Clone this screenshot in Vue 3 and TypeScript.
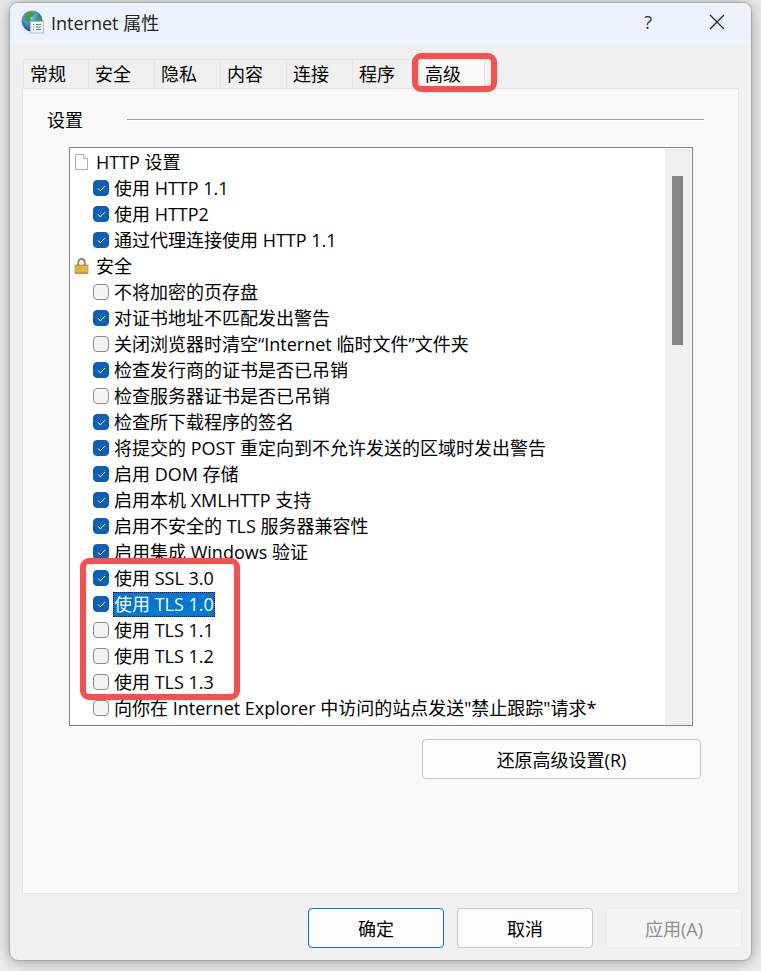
<script setup lang="ts">
interface Row {
  label: string
  kind?: 'page' | 'lock'
  checked?: boolean
  selected?: boolean
}

const tabs = ['常规', '安全', '隐私', '内容', '连接', '程序', '高级']

const rows: Row[] = [
  { label: 'HTTP 设置', kind: 'page' },
  { label: '使用 HTTP 1.1', checked: true },
  { label: '使用 HTTP2', checked: true },
  { label: '通过代理连接使用 HTTP 1.1', checked: true },
  { label: '安全', kind: 'lock' },
  { label: '不将加密的页存盘', checked: false },
  { label: '对证书地址不匹配发出警告', checked: true },
  { label: '关闭浏览器时清空“Internet 临时文件”文件夹', checked: false },
  { label: '检查发行商的证书是否已吊销', checked: true },
  { label: '检查服务器证书是否已吊销', checked: false },
  { label: '检查所下载程序的签名', checked: true },
  { label: '将提交的 POST 重定向到不允许发送的区域时发出警告', checked: true },
  { label: '启用 DOM 存储', checked: true },
  { label: '启用本机 XMLHTTP 支持', checked: true },
  { label: '启用不安全的 TLS 服务器兼容性', checked: true },
  { label: '启用集成 Windows 验证', checked: true },
  { label: '使用 SSL 3.0', checked: true },
  { label: '使用 TLS 1.0', checked: true, selected: true },
  { label: '使用 TLS 1.1', checked: false },
  { label: '使用 TLS 1.2', checked: false },
  { label: '使用 TLS 1.3', checked: false },
  { label: '向你在 Internet Explorer 中访问的站点发送"禁止跟踪"请求*', checked: false },
]
</script>

<template>
  <div class="dialog">
    <header class="titlebar">
      <svg class="app-icon" width="24" height="24" viewBox="0 0 24 24">
        <defs>
          <radialGradient id="globe" cx="0.4" cy="0.3" r="0.8">
            <stop offset="0" stop-color="#8fd0f5" />
            <stop offset="0.55" stop-color="#2f7fc8" />
            <stop offset="1" stop-color="#123f80" />
          </radialGradient>
        </defs>
        <circle cx="11" cy="11" r="10.5" fill="url(#globe)" />
        <path d="M6 2.500l5-1 3 2-2 3-3 1 1 3-3 2-3-3-1-3z" fill="#4e9a3a" />
        <path d="M14 8l5-1 2 3-3 2-3-1z" fill="#4e9a3a" />
        <rect x="9.500" y="11.500" width="13" height="11.500" fill="#eef5fb" stroke="#a9c0d4" />
        <path d="M12 14.500h1M15 14.500h5M12 17h1M15 17h5M12 19.500h1M15 19.500h5" stroke="#5c86a8" />
      </svg>
      <span class="title">Internet 属性</span>
      <span class="help">?</span>
      <svg class="close" width="16" height="16" viewBox="0 0 16 16">
        <path d="M1 1l14 14M15 1L1 15" stroke="#222" stroke-width="1.200" fill="none" />
      </svg>
    </header>

    <div class="content">
      <nav class="tabs">
        <div
          v-for="(tab, i) in tabs"
          :key="tab"
          class="tab"
          :class="{ active: i === tabs.length - 1 }"
        >
          {{ tab }}
        </div>
      </nav>

      <section class="panel">
        <div class="legend">
          <span>设置</span>
          <i class="rule" />
        </div>

        <div class="listbox">
          <ul class="tree">
            <li v-for="row in rows" :key="row.label" class="row" :class="{ head: row.kind }">
              <svg v-if="row.kind === 'page'" class="row-icon" width="16" height="16" viewBox="0 0 16 16">
                <path d="M1.500.500h8l4 4v11h-12z" fill="#fff" stroke="#b0b0b0" />
                <path d="M9.500.500v4h4" fill="#eee" stroke="#b0b0b0" />
              </svg>
              <svg v-else-if="row.kind === 'lock'" class="row-icon" width="16" height="16" viewBox="0 0 16 16">
                <path d="M4.300 8V4.200a3.200 3.200 0 0 1 6.400 0V8" fill="none" stroke="#85857a" stroke-width="1.800" />
                <rect x="1" y="7" width="13" height="8.500" fill="#cf9a28" stroke="#a97c18" stroke-width=".6" />
                <path d="M1 9h13M1 11h13M1 13h13" stroke="#f2d578" stroke-width=".9" />
              </svg>
              <span v-else class="check" :class="{ on: row.checked }">
                <svg v-if="row.checked" width="9" height="7" viewBox="0 0 9 7">
                  <path d="M1 3.500l2.300 2.300L8 1" fill="none" stroke="#fff" stroke-width="1" />
                </svg>
              </span>
              <span class="label" :class="{ selected: row.selected }">{{ row.label }}</span>
            </li>
          </ul>
          <div class="scrollbar"><div class="thumb" /></div>
        </div>

        <div class="reset-line">
          <button class="btn reset">还原高级设置(R)</button>
        </div>
      </section>

      <footer class="actions">
        <button class="btn primary">确定</button>
        <button class="btn">取消</button>
        <button class="btn disabled">应用(A)</button>
      </footer>
    </div>

    <!-- red annotation boxes drawn over the dialog -->
    <div class="mark mark-tab" />
    <div class="mark mark-tls" />
  </div>
</template>

<style>
html,
body {
  margin: 0;
  background: #eeeeee;
}
body {
  width: 761px;
  height: 971px;
  overflow: hidden;
}
</style>

<style scoped>
.dialog {
  position: absolute;
  left: 9px;
  top: 2px;
  width: 743px;
  height: 959px;
  box-sizing: border-box;
  display: flex;
  flex-direction: column;
  border-radius: 9px;
  overflow: hidden;
  background: #f0f0f0;
  border: 1px solid #a8a8a8;
  box-shadow: 0 1px 16px rgba(0, 0, 0, 0.35);
  font-family: 'Open Sans', 'Noto Sans CJK SC', sans-serif;
  font-size: 18px;
  color: #000;
}

.titlebar {
  height: 42px;
  flex-shrink: 0;
  display: flex;
  align-items: center;
  background: #eef3fb;
  padding: 0 26px 5px 11px;
  box-sizing: border-box;
}
.title {
  margin-left: 6px;
  font-size: 18px;
  color: #222;
}
.help {
  margin-left: auto;
  margin-right: 57px;
  font-size: 18px;
  color: #333;
}

.content {
  flex: 1;
  display: flex;
  flex-direction: column;
  padding: 14px 0 0 12px;
  min-height: 0;
}

.tabs {
  display: flex;
  height: 29px;
  padding-left: 1px;
}
.tab {
  width: 66px;
  box-sizing: border-box;
  padding-left: 6px;
  line-height: 29px;
  border: 1px solid #e5e5e5;
  border-left: none;
  border-bottom: none;
  background: #f0f0f0;
}
.tab:first-child {
  border-left: 1px solid #e5e5e5;
}
.tab.active {
  background: #f9f9f9;
}

.panel {
  width: 717px;
  height: 806px;
  box-sizing: border-box;
  border: 1px solid #e5e5e5;
  background: #f9f9f9;
  padding: 17px 0 0 24px;
}

.legend {
  display: flex;
  align-items: center;
  height: 26px;
}
.rule {
  width: 577px;
  height: 1px;
  margin-left: 44px;
  background: #a0a0a0;
  box-shadow: 0 1px 0 #fff;
}

.listbox {
  display: flex;
  width: 624px;
  height: 579px;
  box-sizing: border-box;
  margin: 15px 0 0 22px;
  border: 1px solid #82828c;
  background: #fff;
  overflow: hidden;
}
.tree {
  flex: 1;
  list-style: none;
  margin: 0;
  padding: 1px 0 0;
  min-width: 0;
}
.row {
  height: 26px;
  display: flex;
  align-items: center;
  padding-left: 23px;
  white-space: nowrap;
}
.row.head {
  padding-left: 4px;
}
.row-icon {
  flex-shrink: 0;
  margin-right: 5px;
}
.check {
  width: 16px;
  height: 16px;
  box-sizing: border-box;
  margin-right: 4px;
  flex-shrink: 0;
  display: flex;
  align-items: center;
  justify-content: center;
  border: 1px solid #8d8d8d;
  border-radius: 4px;
  background: #f3f3f3;
}
.check.on {
  border-color: #0a5fb8;
  background: #0a5fb8;
}
.label {
  padding: 0 1px;
  line-height: 25px;
}
.label.selected {
  background: #0078d4;
  color: #fff;
  outline: 1px dotted #111;
  outline-offset: -1px;
}

.scrollbar {
  width: 26px;
  flex-shrink: 0;
  background: #f0f0f0;
  padding: 27px 8px 0 7px;
  box-sizing: border-box;
  margin: 1px 1px 0 0;
}
.thumb {
  height: 169px;
  background: #858585;
}

.reset-line {
  margin: 13px 0 0 375px;
}

.btn {
  width: 136px;
  height: 40px;
  box-sizing: border-box;
  padding: 0;
  border: 1px solid #c6c6c6;
  border-radius: 4px;
  background: #fdfdfd;
  color: #000;
  font: inherit;
}
.btn.reset {
  width: 279px;
}
.btn.primary {
  border-color: #0078d4;
}
.btn.disabled {
  border-color: #ececec;
  background: #f5f5f5;
  color: #8f8f8f;
}

.actions {
  display: flex;
  gap: 13px;
  margin: 14px 0 0 286px;
}

.mark {
  position: absolute;
  box-sizing: border-box;
  border: 6px solid #f9504f;
  border-radius: 9px;
  pointer-events: none;
}
.mark-tab {
  left: 402px;
  top: 50px;
  width: 85px;
  height: 39px;
}
.mark-tls {
  left: 70px;
  top: 555px;
  width: 160px;
  height: 142px;
}
</style>
